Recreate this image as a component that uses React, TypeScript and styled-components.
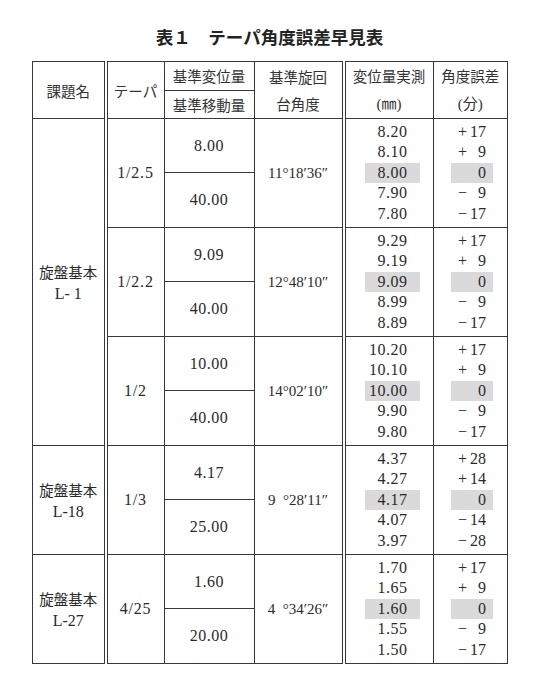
import styled, { createGlobalStyle } from "styled-components";

const GlobalStyle = createGlobalStyle`
  body {
    margin: 0;
    background: #fff;
  }
`;

const LINE = "#383838";
const SERIF = `"Liberation Serif", "Noto Sans CJK JP", serif`;
const CJK = `"Noto Sans CJK JP", sans-serif`;

const Page = styled.div`
  width: 544px;
  padding: 25px 0 30px 32px;
  box-sizing: border-box;
  color: #2a2a2a;
`;

const Title = styled.h1`
  margin: 0 0 12px;
  width: 475px;
  text-align: center;
  font: 700 17.5px/24px ${CJK};
  color: #222;
`;

const Table = styled.table`
  border-collapse: collapse;
  table-layout: fixed;
  width: 475px;
  border: 1px solid ${LINE};
`;

const Col = styled.col<{ $w: number }>`
  width: ${(p) => p.$w}px;
`;

const Th = styled.th<{ $double?: boolean; $h?: number }>`
  border: 1px solid ${LINE};
  ${(p) => p.$double && `border-right: 4px double ${LINE};`}
  ${(p) => p.$h && `height: ${p.$h}px;`}
  padding: 0;
  font: 400 14.5px/27px ${CJK};
  color: #333;
  text-align: center;
  vertical-align: middle;
`;

const Paren = styled.span`
  font-family: ${SERIF};
  font-size: 15px;
`;

const Td = styled.td<{ $double?: boolean; $h?: number }>`
  border: 1px solid ${LINE};
  ${(p) => p.$double && `border-right: 4px double ${LINE};`}
  ${(p) => p.$h && `height: ${p.$h}px;`}
  padding: 0;
  text-align: center;
  vertical-align: middle;
  font: 400 16px/20px ${SERIF};
  letter-spacing: 0.5px;
`;

const NameCell = styled(Td)`
  font: 400 14.5px/21px ${CJK};
  letter-spacing: 0;
`;

const Code = styled.span`
  font-family: ${SERIF};
  font-size: 16px;
`;

const AngleCell = styled(Td)`
  font-size: 15px;
  letter-spacing: 0;
`;

const TaperCell = styled(Td)`
  letter-spacing: 0.8px;
`;

const List = styled.div<{ $pad: number }>`
  display: flex;
  flex-direction: column;
  align-items: flex-end;
  padding-right: ${(p) => p.$pad}px;
`;

const Measure = styled.div<{ $hl: boolean }>`
  width: 55px;
  height: 20.4px;
  line-height: 20.4px;
  padding-right: 12px;
  box-sizing: border-box;
  text-align: right;
  background: ${(p) => (p.$hl ? "#dadada" : "transparent")};
`;

const ErrorBox = styled.div<{ $hl: boolean }>`
  display: flex;
  justify-content: flex-end;
  width: 42px;
  height: 20.4px;
  line-height: 20.4px;
  padding-right: 7px;
  box-sizing: border-box;
  letter-spacing: 0;
  background: ${(p) => (p.$hl ? "#dadada" : "transparent")};
`;

const Sign = styled.span`
  width: 11px;
  text-align: left;
`;

const Num = styled.span`
  width: 17px;
  text-align: right;
`;

type Group = {
  name?: { code: string; span: number };
  taper: string;
  disp: string;
  move: string;
  angle: string;
  meas: string[];
  err: number[];
};

const groups: Group[] = [
  {
    name: { code: "L- 1", span: 6 },
    taper: "1/2.5",
    disp: "8.00",
    move: "40.00",
    angle: "11°18′36″",
    meas: ["8.20", "8.10", "8.00", "7.90", "7.80"],
    err: [17, 9, 0, -9, -17],
  },
  {
    taper: "1/2.2",
    disp: "9.09",
    move: "40.00",
    angle: "12°48′10″",
    meas: ["9.29", "9.19", "9.09", "8.99", "8.89"],
    err: [17, 9, 0, -9, -17],
  },
  {
    taper: "1/2",
    disp: "10.00",
    move: "40.00",
    angle: "14°02′10″",
    meas: ["10.20", "10.10", "10.00", "9.90", "9.80"],
    err: [17, 9, 0, -9, -17],
  },
  {
    name: { code: "L-18", span: 2 },
    taper: "1/3",
    disp: "4.17",
    move: "25.00",
    angle: "9\u2007°28′11″",
    meas: ["4.37", "4.27", "4.17", "4.07", "3.97"],
    err: [28, 14, 0, -14, -28],
  },
  {
    name: { code: "L-27", span: 2 },
    taper: "4/25",
    disp: "1.60",
    move: "20.00",
    angle: "4\u2007°34′26″",
    meas: ["1.70", "1.65", "1.60", "1.55", "1.50"],
    err: [17, 9, 0, -9, -17],
  },
];

function ErrorValue({ v }: { v: number }) {
  const sign = v > 0 ? "+" : v < 0 ? "−" : "";
  return (
    <ErrorBox $hl={v === 0}>
      <Sign>{sign}</Sign>
      <Num>{Math.abs(v)}</Num>
    </ErrorBox>
  );
}

function GroupRows({ g }: { g: Group }) {
  return (
    <>
      <tr>
        {g.name && (
          <NameCell rowSpan={g.name.span} $double>
            旋盤基本
            <br />
            <Code>{g.name.code}</Code>
          </NameCell>
        )}
        <TaperCell rowSpan={2}>{g.taper}</TaperCell>
        <Td $h={53}>{g.disp}</Td>
        <AngleCell rowSpan={2} $double>
          {g.angle}
        </AngleCell>
        <Td rowSpan={2}>
          <List $pad={13}>
            {g.meas.map((m) => (
              <Measure key={m} $hl={m === g.disp}>
                {m}
              </Measure>
            ))}
          </List>
        </Td>
        <Td rowSpan={2}>
          <List $pad={14}>
            {g.err.map((e, i) => (
              <ErrorValue key={i} v={e} />
            ))}
          </List>
        </Td>
      </tr>
      <tr>
        <Td $h={54}>{g.move}</Td>
      </tr>
    </>
  );
}

export default function App() {
  return (
    <>
      <GlobalStyle />
      <Page>
        <Title>表１　テーパ角度誤差早見表</Title>
        <Table>
          <colgroup>
            <Col $w={73} />
            <Col $w={58.5} />
            <Col $w={90} />
            <Col $w={89.5} />
            <Col $w={89.5} />
            <Col $w={74.5} />
          </colgroup>
          <thead>
            <tr>
              <Th rowSpan={2} $double>
                課題名
              </Th>
              <Th rowSpan={2}>テーパ</Th>
              <Th $h={26}>基準変位量</Th>
              <Th rowSpan={2} $double>
                基準旋回
                <br />
                台角度
              </Th>
              <Th rowSpan={2}>
                変位量実測
                <br />
                <Paren>(㎜)</Paren>
              </Th>
              <Th rowSpan={2}>
                角度誤差
                <br />
                <Paren>(分)</Paren>
              </Th>
            </tr>
            <tr>
              <Th $h={27}>基準移動量</Th>
            </tr>
          </thead>
          <tbody>
            {groups.map((g, i) => (
              <GroupRows key={i} g={g} />
            ))}
          </tbody>
        </Table>
      </Page>
    </>
  );
}
